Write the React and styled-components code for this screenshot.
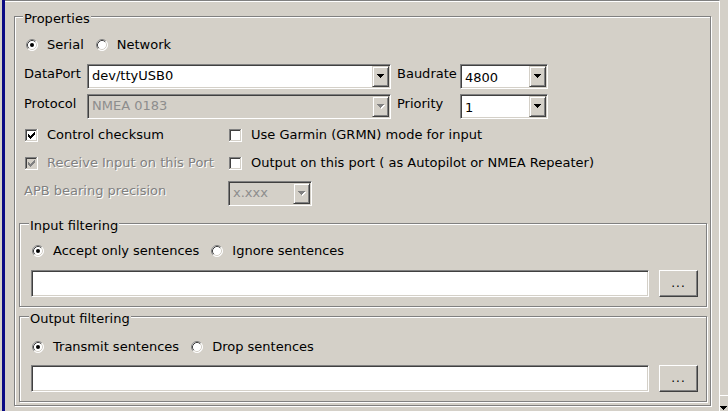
import React from 'react';
import styled, { createGlobalStyle } from 'styled-components';

const Global = createGlobalStyle`
  html, body { margin: 0; padding: 0; background: #d4d0c8; }
  body { font-family: "DejaVu Sans", Verdana, sans-serif; font-size: 13px; color: #000; }
  * { box-sizing: border-box; }
`;

const Page = styled.div`
  display: flex;
  width: 728px;
  height: 411px;
  overflow: hidden;
  background: #d4d0c8;
`;

const Rail = styled.div`
  flex: none;
  width: 3px;
  margin-left: 2px;
  background: #0a0a84;
`;

const Main = styled.div`
  flex: none;
  width: 715px;
  min-width: 0;
  border-top: 1px solid #808080;
  border-right: 1px solid #fff;
  box-shadow: inset 0 1px 0 #fff;
  padding: 15px 0 0 9px;
`;

const ScrollStrip = styled.div`
  flex: none;
  width: 8px;
  display: flex;
  flex-direction: column;
  justify-content: flex-end;
`;

const ScrollDown = styled.div`
  height: 17px;
  border-top: 1px solid #d4d0c8;
  box-shadow: inset 0 1px 0 #fff;
  display: flex;
  align-items: flex-end;
  justify-content: flex-end;
  overflow: hidden;
`;

const Group = styled.div`
  position: relative;
  display: flex;
  flex-direction: column;
  width: ${p => p.$w}px;
  height: ${p => p.$h}px;
  margin-top: ${p => p.$mt || 0}px;
  padding: ${p => p.$pt || 0}px ${p => p.$pr || 0}px 0 ${p => p.$pl || 0}px;
  border: 1px solid #808080;
  box-shadow: inset 1px 1px 0 #fff, 1px 1px 0 #fff;
`;

const Legend = styled.span`
  position: absolute;
  top: -6px;
  left: ${p => p.$left}px;
  padding: 0 1px;
  line-height: 15px;
  background: #d4d0c8;
  white-space: nowrap;
`;

const Rows = styled.div`
  padding-left: 5px;
  display: flex;
  flex-direction: column;
`;

const OptionRow = styled.div`
  display: flex;
  align-items: center;
  gap: 12px;
  height: 16px;
  margin-top: ${p => p.$mt || 0}px;
  padding-left: ${p => p.$pl || 0}px;
`;

const Option = styled.label`
  display: flex;
  align-items: center;
  gap: 9px;
  line-height: 16px;
  white-space: nowrap;
  color: ${p => (p.$disabled ? '#808080' : '#000')};
  text-shadow: ${p => (p.$disabled ? '1px 1px 0 #fff' : 'none')};
`;

const FormGrid = styled.div`
  display: grid;
  grid-template-columns: 63px 304px 6px 63px 88px;
  grid-template-rows: 25px 25px;
  row-gap: 5px;
  margin-top: 11px;
`;

const FieldLabel = styled.span`
  grid-column: ${p => p.$col || 'auto'};
  align-self: start;
  padding-top: 2px;
  line-height: 16px;
  white-space: nowrap;
  color: ${p => (p.$disabled ? '#808080' : '#000')};
  text-shadow: ${p => (p.$disabled ? '1px 1px 0 #fff' : 'none')};
`;

const CheckGrid = styled.div`
  display: grid;
  grid-template-columns: 204px auto;
  grid-template-rows: 28px 28px;
  align-items: center;
  margin-top: 2px;
  & > * { padding-left: 1px; }
`;

const ApbRow = styled.div`
  display: grid;
  grid-template-columns: 204px auto;
  align-items: center;
  height: 25px;
  margin-top: 4px;
`;

const Combo = styled.div`
  grid-column: ${p => p.$col || 'auto'};
  display: flex;
  width: ${p => p.$w}px;
  height: 25px;
  padding: 1px;
  border: 1px solid;
  border-color: #808080 #fff #fff #808080;
  box-shadow: inset 1px 1px 0 #404040, inset -1px -1px 0 #d4d0c8;
  background: ${p => (p.$disabled ? '#d4d0c8' : '#fff')};
`;

const ComboValue = styled.span`
  flex: 1;
  padding: ${p => (p.$low ? '3px' : '1px')} 0 0 3px;
  line-height: 18px;
  white-space: nowrap;
  overflow: hidden;
  color: ${p => (p.$disabled ? '#8d8d8d' : '#000')};
`;

const DropButton = styled.span`
  width: 17px;
  display: flex;
  align-items: center;
  justify-content: center;
  background: #d4d0c8;
  border: 1px solid;
  border-color: #d4d0c8 #404040 #404040 #d4d0c8;
  box-shadow: inset 1px 1px 0 #fff, inset -1px -1px 0 #808080;
`;

const TextBox = styled.div`
  flex: 1;
  min-width: 0;
  height: 27px;
  border: 1px solid;
  border-color: #808080 #fff #fff #808080;
  box-shadow: inset 1px 1px 0 #404040, inset -1px -1px 0 #d4d0c8;
  background: #fff;
`;

const EditRow = styled.div`
  display: flex;
  gap: 10px;
  margin-top: ${p => p.$mt}px;
`;

const MoreButton = styled.button`
  flex: none;
  width: 39px;
  height: 27px;
  padding: 0 0 2px;
  font: inherit;
  font-size: 12px;
  letter-spacing: 1px;
  color: #000;
  background: #d4d0c8;
  border: 1px solid;
  border-color: #fff #404040 #404040 #fff;
  box-shadow: inset -1px -1px 0 #808080;
`;

const Radio = ({ checked }) => (
  <svg width="12" height="12" viewBox="0 0 12 12">
    <circle cx="6" cy="6" r="5.5" fill="#fff" />
    <path d="M9.89 2.11 A5.5 5.5 0 0 0 2.11 9.89" fill="none" stroke="#808080" />
    <path d="M9.89 2.11 A5.5 5.5 0 0 1 2.11 9.89" fill="none" stroke="#fff" />
    <path d="M9.18 2.82 A4.5 4.5 0 0 0 2.82 9.18" fill="none" stroke="#404040" />
    <path d="M9.18 2.82 A4.5 4.5 0 0 1 2.82 9.18" fill="none" stroke="#d4d0c8" />
    {checked && <circle cx="6" cy="6" r="2" fill="#000" />}
  </svg>
);

const Check = ({ checked, disabled }) => (
  <svg width="13" height="13" viewBox="0 0 13 13" shapeRendering="crispEdges">
    <rect x="0" y="0" width="13" height="13" fill="#fff" />
    <rect x="0" y="0" width="12" height="1" fill="#808080" />
    <rect x="0" y="0" width="1" height="12" fill="#808080" />
    <rect x="1" y="1" width="10" height="1" fill="#404040" />
    <rect x="1" y="1" width="1" height="10" fill="#404040" />
    <rect x="1" y="11" width="11" height="1" fill="#d4d0c8" />
    <rect x="11" y="1" width="1" height="11" fill="#d4d0c8" />
    <rect x="2" y="2" width="9" height="9" fill={disabled ? '#d4d0c8' : '#fff'} />
    {checked &&
      [5, 6, 7, 6, 5, 4, 3].map((top, i) => (
        <rect key={i} x={3 + i} y={top} width="1" height="3" fill={disabled ? '#808080' : '#000'} />
      ))}
  </svg>
);

const Arrow = ({ disabled }) => (
  <svg width="8" height="5" viewBox="0 0 8 5" shapeRendering="crispEdges">
    {disabled && <path d="M1 1h7v1h-1v1h-1v1h-1v1h-1v-1h-1v-1h-1v-1h-1z" fill="#fff" />}
    <path d="M0 0h7v1h-1v1h-1v1h-1v1h-1v-1h-1v-1h-1v-1h-1z" fill={disabled ? '#808080' : '#000'} />
  </svg>
);

const ComboBox = ({ value, w, col, disabled, low }) => (
  <Combo $w={w} $col={col} $disabled={disabled}>
    <ComboValue $disabled={disabled} $low={low}>{value}</ComboValue>
    <DropButton>
      <Arrow disabled={disabled} />
    </DropButton>
  </Combo>
);

const Filter = ({ title, mt, h, pt, gap, a, b }) => (
  <Group $w={688} $mt={mt} $h={h} $pt={pt} $pl={11} $pr={8}>
    <Legend $left={9}>{title}</Legend>
    <OptionRow $pl={1}>
      <Option><Radio checked />{a}</Option>
      <Option><Radio />{b}</Option>
    </OptionRow>
    <EditRow $mt={gap}>
      <TextBox />
      <MoreButton>...</MoreButton>
    </EditRow>
  </Group>
);

export default function App() {
  return (
    <Page>
      <Global />
      <Rail />
      <Main>
        <Group $w={697} $h={390} $pl={4} $pr={3}>
          <Legend $left={8}>Properties</Legend>
          <Rows>
            <OptionRow $mt={20} $pl={2}>
              <Option><Radio checked />Serial</Option>
              <Option><Radio />Network</Option>
            </OptionRow>
            <FormGrid>
              <FieldLabel $col={1}>DataPort</FieldLabel>
              <ComboBox col={2} w={304} value="dev/ttyUSB0" />
              <FieldLabel $col={4}>Baudrate</FieldLabel>
              <ComboBox col={5} w={88} value="4800" low />
              <FieldLabel $col={1}>Protocol</FieldLabel>
              <ComboBox col={2} w={304} value="NMEA 0183" disabled />
              <FieldLabel $col={4}>Priority</FieldLabel>
              <ComboBox col={5} w={88} value="1" low />
            </FormGrid>
            <CheckGrid>
              <Option><Check checked />Control checksum</Option>
              <Option><Check />Use Garmin (GRMN) mode for input</Option>
              <Option $disabled><Check checked disabled />Receive Input on this Port</Option>
              <Option><Check />Output on this port ( as Autopilot or NMEA Repeater)</Option>
            </CheckGrid>
            <ApbRow>
              <FieldLabel $disabled>APB bearing precision</FieldLabel>
              <ComboBox w={84} value="x.xxx" disabled />
            </ApbRow>
          </Rows>
          <Filter
            title="Input filtering"
            mt={17}
            h={84}
            pt={19}
            gap={11}
            a="Accept only sentences"
            b="Ignore sentences"
          />
          <Filter
            title="Output filtering"
            mt={9}
            h={86}
            pt={22}
            gap={10}
            a="Transmit sentences"
            b="Drop sentences"
          />
        </Group>
      </Main>
      <ScrollStrip>
        <ScrollDown>
          <Arrow />
        </ScrollDown>
      </ScrollStrip>
    </Page>
  );
}
